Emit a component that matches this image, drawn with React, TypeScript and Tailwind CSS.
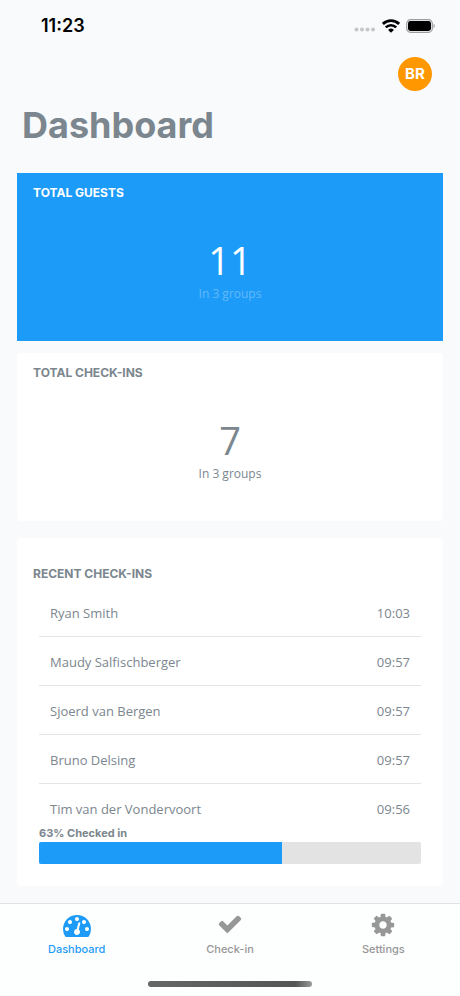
import type { ReactNode } from "react";
import clsx from "clsx";

type CheckIn = { name: string; time: string };

type Tab = {
  id: string;
  label: string;
  viewBox: string;
  size: string;
  path: string;
};

const TOTAL_GUESTS = 11;
const TOTAL_CHECK_INS = 7;
const GROUPS = 3;

const RECENT_CHECK_INS: CheckIn[] = [
  { name: "Ryan Smith", time: "10:03" },
  { name: "Maudy Salfischberger", time: "09:57" },
  { name: "Sjoerd van Bergen", time: "09:57" },
  { name: "Bruno Delsing", time: "09:57" },
  { name: "Tim van der Vondervoort", time: "09:56" },
];

const TABS: Tab[] = [
  {
    id: "dashboard",
    label: "Dashboard",
    viewBox: "0 128 1792 1536",
    size: "h-6 w-7",
    path: "M384 1152q0-53-37.5-90.5t-90.5-37.5-90.5 37.5-37.5 90.5 37.5 90.5 90.5 37.5 90.5-37.5 37.5-90.5zm192-448q0-53-37.5-90.5t-90.5-37.5-90.5 37.5-37.5 90.5 37.5 90.5 90.5 37.5 90.5-37.5 37.5-90.5zm428 481l101-382q6-26-7.5-48.5t-38.5-29.5-48 6.5-30 39.5l-101 382q-60 5-107 43.5t-63 98.5q-20 77 20 146t117 89 146-20 89-117q16-60-6-117t-72-91zm660-33q0-53-37.5-90.5t-90.5-37.5-90.5 37.5-37.5 90.5 37.5 90.5 90.5 37.5 90.5-37.5 37.5-90.5zm-640-640q0-53-37.5-90.5t-90.5-37.5-90.5 37.5-37.5 90.5 37.5 90.5 90.5 37.5 90.5-37.5 37.5-90.5zm448 192q0-53-37.5-90.5t-90.5-37.5-90.5 37.5-37.5 90.5 37.5 90.5 90.5 37.5 90.5-37.5 37.5-90.5zm320 448q0 261-141 483-19 29-54 29h-1402q-35 0-54-29-141-221-141-483 0-182 71-348t191-286 286-191 348-71 348 71 286 191 191 286 71 348z",
  },
  {
    id: "check-in",
    label: "Check-in",
    viewBox: "0 80 1792 1792",
    size: "size-[26px]",
    path: "M1671 566q0 40-28 68l-724 724-136 136q-28 28-68 28t-68-28l-136-136-362-362q-28-28-28-68t28-68l136-136q28-28 68-28t68 28l294 295 656-657q28-28 68-28t68 28l136 136q28 28 28 68z",
  },
  {
    id: "settings",
    label: "Settings",
    viewBox: "0 0 1792 1792",
    size: "size-[26px]",
    path: "M1152 896q0-106-75-181t-181-75-181 75-75 181 75 181 181 75 181-75 75-181zm512-109v222q0 12-8 23t-20 13l-185 28q-19 54-39 91 35 50 107 138 10 12 10 25t-9 23q-27 37-99 108t-94 71q-12 0-26-9l-138-108q-44 23-91 38-16 136-29 186-7 28-36 28h-222q-14 0-24.5-8.5t-11.5-21.5l-28-184q-49-16-90-37l-141 107q-10 9-25 9-14 0-25-11-126-114-165-168-7-10-7-23 0-12 8-23 15-21 51-66.5t54-70.5q-27-50-41-99l-183-27q-13-2-21-12.5t-8-23.5v-222q0-12 8-23t19-13l186-28q14-46 39-92-40-57-107-138-10-12-10-24 0-10 9-23 26-36 98.5-107.5t94.5-71.5q13 0 26 10l138 107q44-23 91-38 16-136 29-186 7-28 36-28h222q14 0 24.5 8.5t11.5 21.5l28 184q49 16 90 37l142-107q9-9 24-9 13 0 25 10 129 119 165 170 7 8 7 22 0 12-8 23-15 21-51 66.5t-54 70.5q26 50 41 98l183 28q13 2 21 12.5t8 23.5z",
  },
];

const StatusBar = () => (
  <div className="flex h-[51px] items-center justify-between pr-6 pl-[41px] text-black">
    <span className="text-[18px] leading-6 font-semibold">11:23</span>
    <div className="flex items-center gap-[6px]">
      <svg className="mt-2 h-[5px] w-[22px] fill-[#c4c6c8]" viewBox="0 0 22 5" aria-hidden="true">
        <circle cx="2.5" cy="2.5" r="2" />
        <circle cx="8" cy="2.5" r="2" />
        <circle cx="13.5" cy="2.5" r="2" />
        <circle cx="19" cy="2.5" r="2" />
      </svg>
      <svg className="h-[14px] w-[18px]" viewBox="0 0 18 14" fill="none" stroke="currentColor" aria-hidden="true">
        <path d="M.9 4.9a11.6 11.6 0 0 1 16.2 0" strokeWidth="2.8" />
        <path d="M3.8 8.4a7.4 7.4 0 0 1 10.4 0" strokeWidth="2.6" />
        <path d="M9 13.8 6.1 11a4.1 4.1 0 0 1 5.8 0z" fill="currentColor" stroke="none" />
      </svg>
      <svg className="h-[14px] w-[30px]" viewBox="0 0 30 14" aria-hidden="true">
        <rect x="0.7" y="0.7" width="25.6" height="12.6" rx="3.8" fill="none" stroke="#9b9d9f" strokeWidth="1.2" />
        <rect x="2" y="2" width="23" height="10" rx="2.4" fill="#000" />
        <path d="M27.5 4.8c1.8.7 1.8 3.7 0 4.4z" fill="#9b9d9f" />
      </svg>
    </div>
  </div>
);

const CardTitle = ({ children }: { children: ReactNode }) => (
  <h2 className="text-[12px] leading-4 font-bold uppercase">{children}</h2>
);

const StatCard = ({
  title,
  value,
  note,
  highlighted = false,
}: {
  title: string;
  value: number;
  note: string;
  highlighted?: boolean;
}) => (
  <section
    className={clsx(
      "px-4 pt-3 pb-[37px]",
      highlighted ? "bg-[#1d9bf8] text-white" : "rounded-sm bg-white text-[#7b868e]",
    )}
  >
    <CardTitle>{title}</CardTitle>
    <div className="flex flex-col items-center pt-[35px] font-['Open_Sans','Noto_Sans',sans-serif]">
      <p className="text-[38px] leading-[48px]">{value}</p>
      <p className={clsx("text-[12px] leading-5", highlighted && "text-[#63b9f8]")}>{note}</p>
    </div>
  </section>
);

const RecentCheckIns = () => {
  const ratio = TOTAL_CHECK_INS / TOTAL_GUESTS;
  const percent = Math.floor(ratio * 100);

  return (
    <section className="rounded-sm bg-white pt-7 pb-[22px] text-[#7b868e]">
      <div className="px-4">
        <CardTitle>Recent check-ins</CardTitle>
      </div>
      <div className="px-[22px] pt-[6px]">
        <ul className="font-['Open_Sans','Noto_Sans',sans-serif] text-[13px] leading-5">
          {RECENT_CHECK_INS.map(({ name, time }) => (
            <li
              key={name}
              className="flex justify-between border-b border-[#e3e5e7] px-[11px] pt-[15px] pb-[13px] last:border-0 last:pb-[6px]"
            >
              <span>{name}</span>
              <time>{time}</time>
            </li>
          ))}
        </ul>
        <p id="checked-in" className="text-[11px] leading-4 font-bold">
          {percent}% Checked in
        </p>
        <div
          role="progressbar"
          aria-labelledby="checked-in"
          aria-valuenow={percent}
          className="mt-px h-[22px] overflow-hidden rounded-xs bg-[#e3e3e3]"
        >
          <div className="h-full bg-[#1d9bf8]" style={{ width: `${ratio * 100}%` }} />
        </div>
      </div>
    </section>
  );
};

const TabBar = ({ active }: { active: string }) => (
  <nav className="border-t border-[#dfe2e5] bg-[#fdfefe] pt-2">
    <div className="grid grid-cols-3">
      {TABS.map(({ id, label, viewBox, size, path }) => (
        <a
          key={id}
          href={`#${id}`}
          aria-current={id === active ? "page" : undefined}
          className={clsx(
            "flex flex-col items-center gap-[3px] text-[11px] leading-4 font-medium",
            id === active ? "text-[#1d9bf8]" : "text-[#979797]",
          )}
        >
          <span className="flex h-[26px] items-center">
            <svg className={size} viewBox={viewBox} fill="currentColor" aria-hidden="true">
              <path d={path} />
            </svg>
          </span>
          {label}
        </a>
      ))}
    </div>
    <div className="flex justify-center pt-6 pb-[9px]">
      <span className="h-[6px] w-[164px] rounded-full bg-linear-to-r from-[#666] via-[#555] via-90% to-[#999]" />
    </div>
  </nav>
);

export default function App() {
  return (
    <div className="flex min-h-screen flex-col bg-[#f8fafc] font-['Inter','Liberation_Sans',sans-serif]">
      <StatusBar />
      <header className="pt-[6px] pr-7 pl-[22px]">
        <div className="flex justify-end">
          <button
            type="button"
            className="flex size-[34px] items-center justify-center rounded-full bg-[#ff9800] text-[15px] font-bold text-white"
          >
            BR
          </button>
        </div>
        <h1 className="pt-[10px] text-[36px] leading-[48px] font-bold text-[#7b868e]">Dashboard</h1>
      </header>
      <main className="flex flex-1 flex-col px-[17px] pt-6 pb-[17px]">
        <StatCard title="Total guests" value={TOTAL_GUESTS} note={`In ${GROUPS} groups`} highlighted />
        <div className="pt-3 pb-[17px]">
          <StatCard title="Total check-ins" value={TOTAL_CHECK_INS} note={`In ${GROUPS} groups`} />
        </div>
        <RecentCheckIns />
      </main>
      <TabBar active="dashboard" />
    </div>
  );
}
